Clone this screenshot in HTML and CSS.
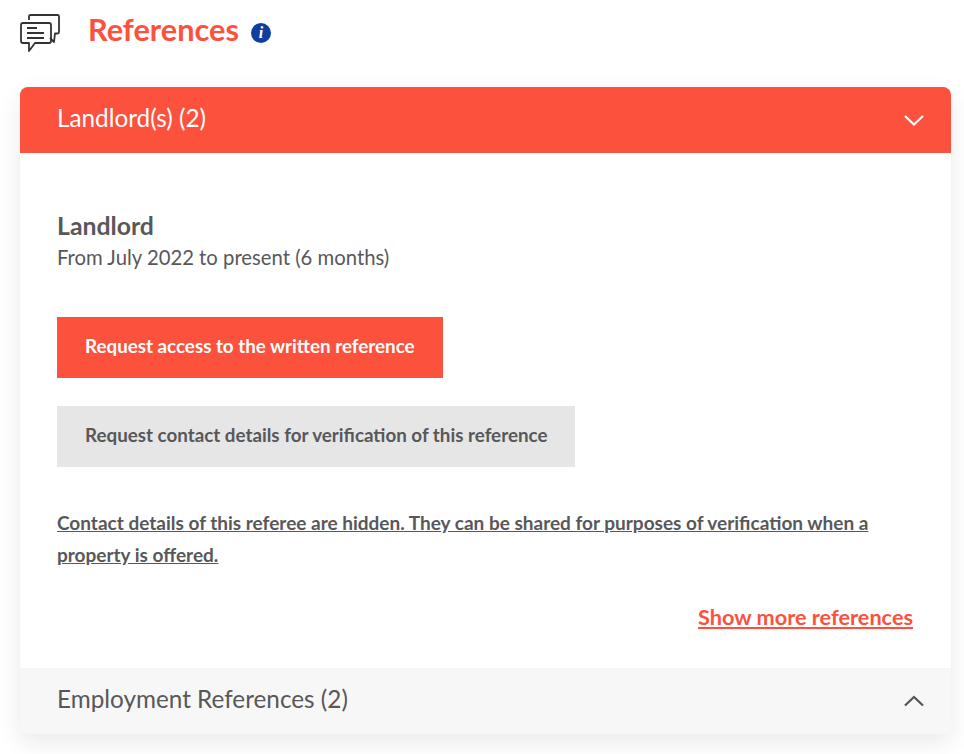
FILE: index.html
```html
<!DOCTYPE html>
<html lang="en">
  <head>
    <meta charset="UTF-8">
    <title>References</title>
    <link rel="stylesheet" href="styles.css">
  </head>
  <body>
    <div class="page-title">
      <svg class="title-icon" width="42" height="40" viewBox="0 0 42 40" fill="none" stroke="#333" stroke-width="1.8" stroke-linejoin="round">
        <path d="M9 8V4.5Q9 3 10.5 3H37.5Q39 3 39 4.5V20Q39 21.5 37.5 21.5H35L34 30L30 26"/>
        <path d="M3 11H29Q31 11 31 13V29Q31 31 29 31H15L9 39V31H3Q1 31 1 29V13Q1 11 3 11Z"/>
        <path d="M7 16H17M7 21H24M7 26H24"/>
      </svg>
      <h1>References</h1>
      <span class="info-dot">i</span>
    </div>

    <div class="card">
      <div class="card-head head-open">
        <span class="head-text">Landlord(s) (2)</span>
        <svg width="22" height="12" viewBox="0 0 22 12" fill="none" stroke="#fff" stroke-width="2.2"><path d="M2 2L11 10.5L20 2"/></svg>
      </div>

      <div class="card-body">
        <h2>Landlord</h2>
        <p class="dates">From July 2022 to present (6 months)</p>
        <a class="btn btn-red">Request access to the written reference</a>
        <a class="btn btn-grey">Request contact details for verification of this reference</a>
        <p class="hidden-note">Contact details of this referee are hidden. They can be shared for purposes of verification when a property is offered.</p>
        <div class="more-row"><a class="more-link">Show more references</a></div>
      </div>

      <div class="card-head head-closed">
        <span class="head-text">Employment References (2)</span>
        <svg width="22" height="12" viewBox="0 0 22 12" fill="none" stroke="#555" stroke-width="2.2"><path d="M2 10.5L11 2L20 10.5"/></svg>
      </div>
    </div>
  </body>
</html>
```

FILE: styles.css
```css
body {
  font-family: "Lato", "Noto Sans", sans-serif;
  background-color: #fff;
  color: #58585a;
  margin: 0;
  padding: 12px 13px 20px 20px;
}
.page-title {
  display: flex;
  align-items: center;
  height: 40px;
  margin-bottom: 35px;
}
.title-icon {
  flex-shrink: 0;
}
h1 {
  font-size: 30.7px;
  font-weight: 700;
  color: #fb513d;
  margin: 0 12px 0 26px;
  position: relative;
  top: -3px;
}
.info-dot {
  width: 20px;
  height: 20px;
  margin-top: 2px;
  border-radius: 50%;
  background-color: #0f3f9e;
  color: #fff;
  font-family: "Liberation Serif", serif;
  font-style: italic;
  font-weight: 700;
  font-size: 16px;
  line-height: 20px;
  text-align: center;
}
.card {
  border-radius: 8px;
  box-shadow: 0 8px 24px rgba(0, 0, 0, 0.09);
  overflow: hidden;
}
.card-head {
  display: flex;
  align-items: center;
  justify-content: space-between;
  padding: 0 26px 0 37px;
  font-size: 24.3px;
}
.head-text {
  padding-bottom: 6px;
}
.head-open {
  height: 66px;
  background-color: #fb513d;
  color: #fff;
}
.head-closed {
  height: 66px;
  background-color: #f7f7f7;
}
.card-body {
  padding: 59px 37px 0;
  background-color: #fff;
}
h2 {
  font-size: 24.8px;
  font-weight: 700;
  line-height: 28px;
  margin: 0;
}
.dates {
  font-size: 20.3px;
  line-height: 28px;
  margin: 3px 0 46px;
}
.btn {
  display: block;
  width: fit-content;
  height: 61px;
  line-height: 58px;
  padding: 0 28px;
  font-size: 18.8px;
  font-weight: 700;
}
.btn-red {
  background-color: #fb513d;
  color: #fff;
  margin-bottom: 28px;
}
.btn-grey {
  background-color: #e6e6e6;
  color: #58585a;
}
.hidden-note {
  font-size: 19px;
  font-weight: 700;
  line-height: 32px;
  text-decoration: underline;
  margin: 40px 0 0;
}
.more-row {
  display: flex;
  justify-content: flex-end;
  padding: 30px 1px 35px 0;
}
.more-link {
  font-size: 21.7px;
  font-weight: 700;
  line-height: 32px;
  color: #fb513d;
  text-decoration: underline;
}
```
